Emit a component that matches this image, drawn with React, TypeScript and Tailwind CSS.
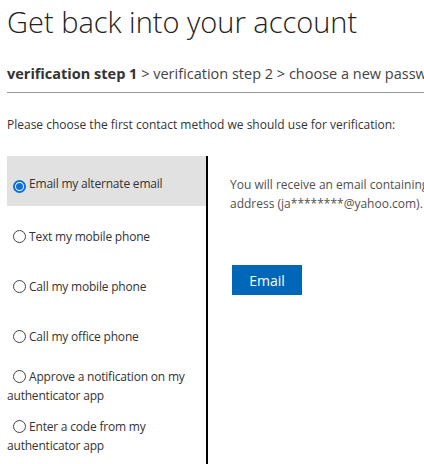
import React from 'react'

const OPTIONS = [
  { id: 'email', label: 'Email my alternate email' },
  { id: 'text', label: 'Text my mobile phone' },
  { id: 'call', label: 'Call my mobile phone' },
  { id: 'office', label: 'Call my office phone' },
  { id: 'approve', label: 'Approve a notification on my authenticator app' },
  { id: 'code', label: 'Enter a code from my authenticator app' },
]

function Radio({ checked }: { checked: boolean }) {
  if (checked) {
    return (
      <span className="inline-flex w-[13px] h-[13px] rounded-full border-2 border-[#0b6fd8] bg-white items-center justify-center ml-[6px] mr-[3px] align-[-2px]">
        <span className="w-[7px] h-[7px] rounded-full bg-[#0b6fd8]" />
      </span>
    )
  }
  return (
    <span className="inline-block w-[13px] h-[13px] rounded-full border border-[#444] bg-white ml-[6px] mr-[3px] align-[-2px]" />
  )
}

export default function App() {
  const selected = 'email'

  return (
    <div className="w-[424px] h-[464px] overflow-hidden bg-white font-['Open_Sans',sans-serif]">
      <div className="w-[760px] pl-[7px] pt-[7px]">
        {/* Title */}
        <h1 className="text-[29px] font-light leading-none text-[#222]">Get back into your account</h1>

        {/* Steps */}
        <div className="mt-[28px] pb-[8px] border-b border-[#999] text-[14.5px] leading-[20px] text-[#444] whitespace-nowrap">
          <span className="font-bold text-[#333]">verification step 1</span>
          {' > verification step 2 > choose a new password'}
        </div>

        <p className="mt-[24px] text-[12px] leading-[16px] text-[#333]">
          Please choose the first contact method we should use for verification:
        </p>

        <div className="mt-[23px] flex">
          {/* Options */}
          <div className="w-[201px] border-r-2 border-black text-[12px] tracking-[-0.2px] text-[#333] pb-[10px]">
            {OPTIONS.map(o => {
              const active = o.id === selected
              return (
                <div
                  key={o.id}
                  className={
                    active
                      ? 'flex h-[50px] items-center pt-[4px] bg-[#e1e1e1]'
                      : 'flex h-[50px] items-center pt-[10px]'
                  }
                >
                  <div className="leading-[19px]">
                    <Radio checked={active} />
                    {o.label}
                  </div>
                </div>
              )
            })}
          </div>

          {/* Detail */}
          <div className="w-[480px] pl-[22px] pt-[19px]">
            <p className="text-[12px] leading-[19px] text-[#505050]">
              You will receive an email containing a verification code at your alternate email address (ja********@yahoo.com).
            </p>
            <button className="mt-[52px] ml-[2px] w-[70px] h-[30px] bg-[#0067b8] text-white text-[14px]">
              Email
            </button>
          </div>
        </div>
      </div>
    </div>
  )
}
